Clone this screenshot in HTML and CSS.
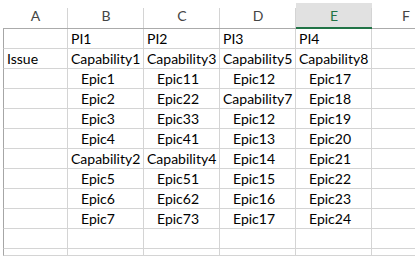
FILE: index.html
```html
<!DOCTYPE html>
<html>
<head>
<meta charset="utf-8">
<link rel="stylesheet" href="styles.css">
</head>
<body>
<div class="sheet">
  <div class="hd">A</div><div class="hd">B</div><div class="hd">C</div><div class="hd">D</div><div class="hd sel">E</div><div class="hd f">F</div>

  <div class="c a"></div><div class="c">PI1</div><div class="c">PI2</div><div class="c">PI3</div><div class="c">PI4</div><div class="c f"></div>
  <div class="c a">Issue</div><div class="c">Capability1</div><div class="c">Capability3</div><div class="c">Capability5</div><div class="c">Capability8</div><div class="c f"></div>
  <div class="c a"></div><div class="c in">Epic1</div><div class="c in">Epic11</div><div class="c in">Epic12</div><div class="c in">Epic17</div><div class="c f"></div>
  <div class="c a"></div><div class="c in">Epic2</div><div class="c in">Epic22</div><div class="c">Capability7</div><div class="c in">Epic18</div><div class="c f"></div>
  <div class="c a"></div><div class="c in">Epic3</div><div class="c in">Epic33</div><div class="c in">Epic12</div><div class="c in">Epic19</div><div class="c f"></div>
  <div class="c a"></div><div class="c in">Epic4</div><div class="c in">Epic41</div><div class="c in">Epic13</div><div class="c in">Epic20</div><div class="c f"></div>
  <div class="c a"></div><div class="c">Capability2</div><div class="c">Capability4</div><div class="c in">Epic14</div><div class="c in">Epic21</div><div class="c f"></div>
  <div class="c a"></div><div class="c in">Epic5</div><div class="c in">Epic51</div><div class="c in">Epic15</div><div class="c in">Epic22</div><div class="c f"></div>
  <div class="c a"></div><div class="c in">Epic6</div><div class="c in">Epic62</div><div class="c in">Epic16</div><div class="c in">Epic23</div><div class="c f"></div>
  <div class="c a"></div><div class="c in">Epic7</div><div class="c in">Epic73</div><div class="c in">Epic17</div><div class="c in">Epic24</div><div class="c f"></div>
  <div class="c a"></div><div class="c"></div><div class="c"></div><div class="c"></div><div class="c"></div><div class="c f"></div>
  <div class="c a"></div><div class="c"></div><div class="c"></div><div class="c"></div><div class="c"></div><div class="c f"></div>
</div>
</body>
</html>
```
FILE: styles.css
```css
html, body {
  margin: 0;
  padding: 0;
  background: #ffffff;
  overflow: hidden;
}
.sheet {
  margin: 3px 0 0 3px;
  display: grid;
  grid-template-columns: 65px 76px 76px 76px 76px 43px;
  grid-template-rows: 26px repeat(11, 20px) 7px;
  font-family: Lato, "Liberation Sans", sans-serif;
  font-size: 14px;
  color: #000;
}
.hd {
  box-sizing: border-box;
  border-bottom: 1px solid #ababab;
  background: linear-gradient(#d4d4d4, #d4d4d4) right 5px / 1px calc(100% - 5px) no-repeat;
  color: #444444;
  text-align: center;
  line-height: 24px;
  padding-top: 1px;
}
.hd.sel {
  background: linear-gradient(#d4d4d4, #d4d4d4) right 5px / 1px calc(100% - 5px) no-repeat, #e1e1e1;
  border-bottom: 2px solid #217346;
  color: #217346;
  line-height: 23px;
}
.hd.f {
  background: none;
  text-align: left;
  padding-left: 30px;
}
.c {
  box-sizing: border-box;
  border-right: 1px solid #d4d4d4;
  border-bottom: 1px solid #d4d4d4;
  padding: 0 0 0 3px;
  line-height: 19px;
  white-space: nowrap;
  overflow: hidden;
}
.c.a {
  border-left: 1px solid #a6a6a6;
}
.c.f {
  border-right: none;
}
.c.in {
  padding-left: 13px;
}
```
